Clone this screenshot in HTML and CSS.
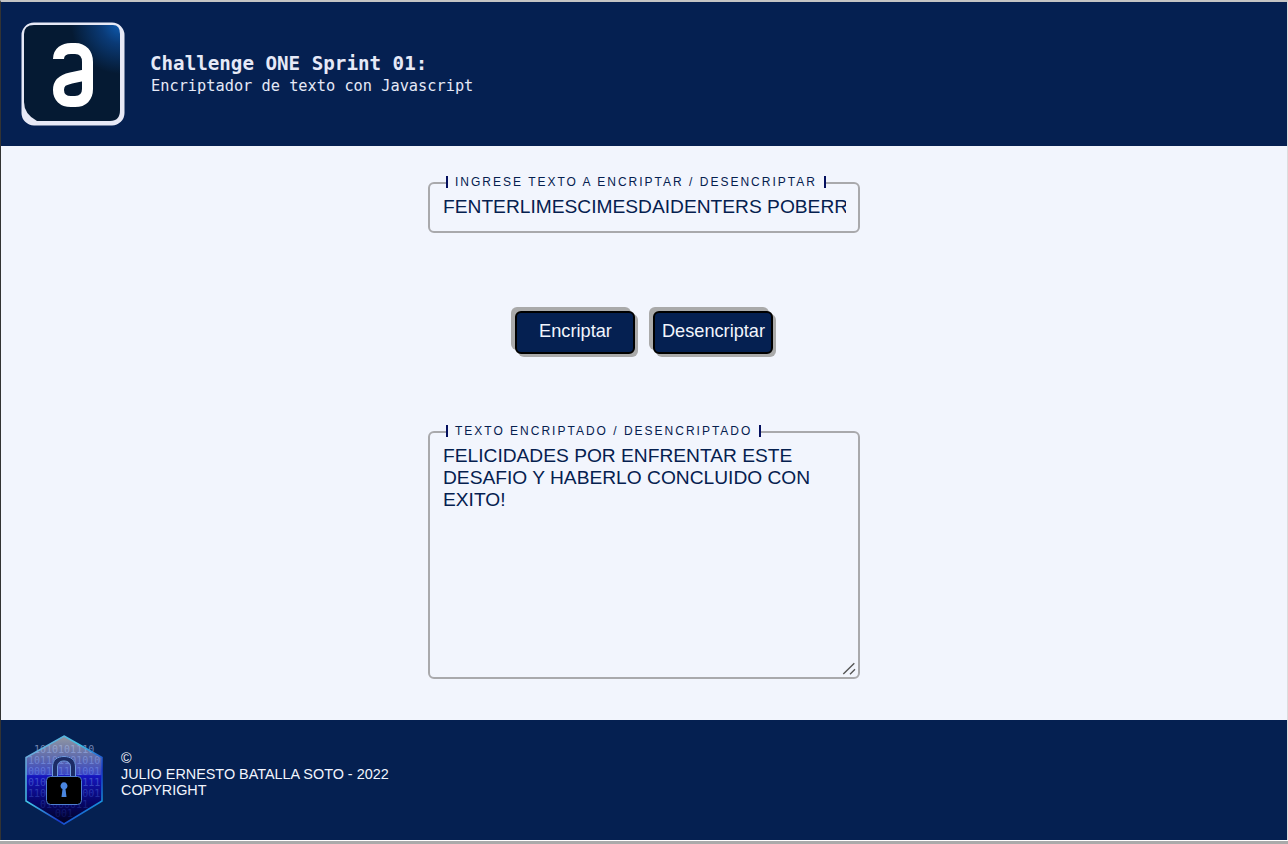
FILE: index.html
```html
<!DOCTYPE html>
<html lang="en">
<head>
  <meta charset="UTF-8">
  <title>Challenge ONE Sprint 01</title>
  <link rel="stylesheet" href="styles.css">
</head>
<body>
  <div class="page">
    <header class="top">
      <svg class="logo" viewBox="0 0 104 104" aria-label="Logo">
        <defs>
          <radialGradient id="glow" gradientUnits="userSpaceOnUse" cx="100" cy="2" r="50">
            <stop offset="0" stop-color="#0e5db4"/>
            <stop offset="0.4" stop-color="#0a3a76"/>
            <stop offset="1" stop-color="#051a33"/>
          </radialGradient>
        </defs>
        <rect x="2" y="2" width="100" height="100" rx="11" fill="#e7e9f6" stroke="#e7e9f6" stroke-width="3"/>
        <path d="M13 3 H92 Q99 3 99 12 V88 Q99 99 89 99 H16 Q3 92 3 80 V12 Q3 3 13 3 Z" fill="url(#glow)"/>
        <path d="M37.500 37 C37.500 30 43 26.500 50 26.500 H54 C62 26.500 66.500 32 66.500 40 V67 C66.500 75 62 79.500 54 79.500 H50 C42 79.500 37.500 75 37.500 68 C37.500 60 43 57.500 50 56 L66.500 52.500" fill="none" stroke="#fff" stroke-width="11"/>
      </svg>
      <div class="top-text">
        <h1>Challenge ONE Sprint 01:</h1>
        <p>Encriptador de texto con Javascript</p>
      </div>
    </header>

    <main class="content">
      <fieldset class="box box-small">
        <legend><span>INGRESE TEXTO A ENCRIPTAR / DESENCRIPTAR</span></legend>
        <input class="field" type="text" value="FENTERLIMESCIMESDAIDENTERS POBERR">
      </fieldset>

      <div class="actions">
        <button class="btn" type="button">Encriptar</button>
        <button class="btn" type="button">Desencriptar</button>
      </div>

      <fieldset class="box box-big">
        <legend><span>TEXTO ENCRIPTADO / DESENCRIPTADO</span></legend>
        <div class="area-wrap">
          <textarea class="field area">FELICIDADES POR ENFRENTAR ESTE DESAFIO Y HABERLO CONCLUIDO CON EXITO!</textarea>
          <svg class="grip" viewBox="0 0 14 14" aria-hidden="true">
            <path d="M1.300 13 L12.300 2.300 M8 13.300 L13 8.300" fill="none" stroke="#555" stroke-width="1.400"/>
          </svg>
        </div>
      </fieldset>
    </main>

    <footer class="bottom">
      <svg class="badge" viewBox="0 0 78 90" aria-label="Candado">
        <defs>
          <linearGradient id="hexFill" x1="0" y1="0" x2="0" y2="1">
            <stop offset="0" stop-color="#9298a2"/>
            <stop offset="0.25" stop-color="#5e6aac"/>
            <stop offset="0.44" stop-color="#3a46c4"/>
            <stop offset="0.45" stop-color="#1616c0"/>
            <stop offset="0.75" stop-color="#06066a"/>
            <stop offset="1" stop-color="#02021e"/>
          </linearGradient>
          <linearGradient id="hexEdge" x1="0" y1="0" x2="1" y2="1">
            <stop offset="0" stop-color="#7d9fd6"/>
            <stop offset="0.4" stop-color="#3fc4e6"/>
            <stop offset="0.7" stop-color="#1838c8"/>
            <stop offset="1" stop-color="#18d4ea"/>
          </linearGradient>
          <linearGradient id="bitFill" gradientUnits="userSpaceOnUse" x1="0" y1="8" x2="0" y2="84">
            <stop offset="0" stop-color="#aab8dc"/>
            <stop offset="0.4" stop-color="#5f7ce6"/>
            <stop offset="0.7" stop-color="#2a3cb0"/>
            <stop offset="1" stop-color="#0c1460"/>
          </linearGradient>
        </defs>
        <path d="M39 1 L77 22.500 V66 L39 89 L1 66 V22.500 Z" fill="url(#hexFill)"/>
        <g class="bits">
          <text x="9" y="18">1010101110</text>
          <text x="3" y="29">101101101010</text>
          <text x="3" y="40">000101101001</text>
          <text x="3" y="51">010011010111</text>
          <text x="3" y="62">110010101001</text>
          <text x="15" y="73">01000011</text>
          <text x="30" y="82">001</text>
        </g>
        <path d="M39 1 L77 22.500 V66 L39 89 L1 66 V22.500 Z" fill="none" stroke="url(#hexEdge)" stroke-width="1.500"/>
        <path d="M30 43 V32 C30 26 33 23.500 39 23.500 C45 23.500 48 26 48 32 V43" fill="none" stroke="#1c2c66" stroke-width="5"/>
        <path d="M27.500 42 V32 C27.500 25 32 21.500 39 21.500 C46 21.500 50.500 25 50.500 32 V42 M32.500 42 V32 C32.500 28 35 26 39 26 C43 26 45.500 28 45.500 32 V42" fill="none" stroke="#6f9ae0" stroke-width="1"/>
        <rect x="21.500" y="41.500" width="35" height="28" rx="4" fill="#000" stroke="#4f7fd0" stroke-width="1"/>
        <path d="M37.500 54 L36.500 62 H41.500 L40.500 54 A3.500 3.500 0 1 0 37.500 54 Z" fill="#4a86e0"/>
      </svg>
      <div class="credits">
        <div>&copy;</div>
        <div>JULIO ERNESTO BATALLA SOTO - 2022</div>
        <div>COPYRIGHT</div>
      </div>
    </footer>
  </div>
</body>
</html>
```

FILE: styles.css
```css
html, body {
  margin: 0;
  padding: 0;
  height: 100%;
  background: #aaa;
  font-family: "Liberation Sans", Arial, sans-serif;
}

.page {
  box-sizing: border-box;
  height: 840px;
  display: flex;
  flex-direction: column;
  border-top: 2px solid #c4c4c4;
  border-left: 1px solid #333;
  border-right: 1px solid #ddd;
  box-shadow: 0 1px 0 #fff;
  background: #f2f5fd;
}

.top {
  height: 144px;
  flex: none;
  display: flex;
  align-items: center;
  gap: 25px;
  padding-left: 20px;
  background: #052051;
  color: #e6e9f7;
}

.logo {
  width: 104px;
  height: 104px;
  flex: none;
}

.top-text {
  margin-bottom: 1px;
  font-family: "DejaVu Sans Mono", "Liberation Mono", monospace;
}

.top-text h1 {
  margin: 0 0 2px;
  font-size: 19.200px;
  line-height: 23px;
  font-weight: bold;
}

.top-text p {
  margin: 0 0 0 1px;
  font-size: 15.300px;
  line-height: 18px;
}

.content {
  flex: 1;
  display: flex;
  flex-direction: column;
  align-items: center;
  padding-top: 30px;
}

.box {
  box-sizing: border-box;
  width: 432px;
  margin: 0;
  padding: 0 12px;
  border: 2px solid #a9a9ac;
  border-radius: 6px;
  color: #05204f;
}

.box legend {
  height: 14px;
  margin: 0 0 2px 4px;
  padding: 0;
}

.box legend span {
  display: block;
  padding: 0 7px;
  border-left: 2px solid #05105f;
  border-right: 2px solid #05105f;
  font-size: 12px;
  line-height: 12px;
  letter-spacing: 2px;
}

.box-small {
  height: 57px;
}

.box-big {
  height: 254px;
}

.field {
  display: block;
  box-sizing: border-box;
  width: 100%;
  padding: 0 0 0 1px;
  border: 0;
  outline: 0;
  background: transparent;
  color: #05204f;
  font-family: "Liberation Sans", Arial, sans-serif;
  font-size: 19.200px;
  line-height: 22px;
}

.box-small .field {
  margin-top: 4px;
}

.area-wrap {
  position: relative;
  height: 236px;
}

.area {
  height: 100%;
  padding-top: 4px;
  resize: none;
}

.grip {
  position: absolute;
  right: -10px;
  bottom: 2px;
  width: 14px;
  height: 14px;
}

.actions {
  display: flex;
  gap: 18px;
  margin: 78px 0 71px;
}

.btn {
  box-sizing: border-box;
  width: 120px;
  height: 43px;
  padding: 0 0 2px 1px;
  border: 2px solid #000;
  border-radius: 6px;
  background: #052051;
  color: #f2f5fd;
  font-family: "Liberation Sans", Arial, sans-serif;
  font-size: 18.200px;
  box-shadow: -4px -4px 0 #aaa, 3px 3px 0 #aaa;
}

.bottom {
  height: 120px;
  flex: none;
  display: flex;
  align-items: center;
  gap: 18px;
  padding-left: 24px;
  background: #052051;
  color: #f2f5fd;
}

.badge {
  width: 78px;
  height: 90px;
  flex: none;
}

.bits {
  font-family: "DejaVu Sans Mono", monospace;
  font-size: 10px;
  fill: url(#bitFill);
  opacity: 0.700;
}

.credits {
  margin-bottom: 12px;
  font-size: 14.400px;
  line-height: 16px;
}
```
